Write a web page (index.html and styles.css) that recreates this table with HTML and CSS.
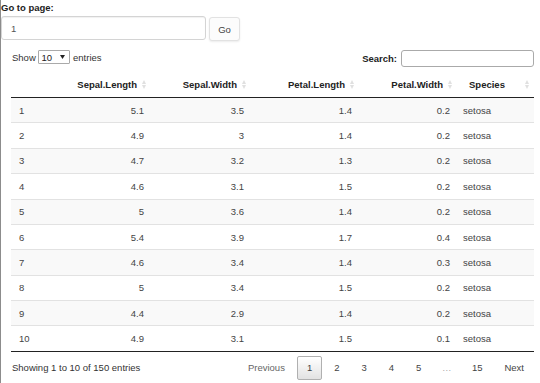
FILE: index.html
```html
<!DOCTYPE html>
<html>
<head>
<meta charset="utf-8">
<link rel="stylesheet" href="styles.css">
</head>
<body>
<div class="goto">
  <div class="goto-label">Go to page:</div>
  <div class="goto-row">
    <input class="page-input" type="text" value="1">
    <button class="go-btn">Go</button>
  </div>
</div>
<div class="dt">
  <div class="controls">
    <div class="length">Show <span class="sel">10<svg class="caret" width="5" height="4" viewBox="0 0 5 4"><path d="M0 0H5L2.5 4Z" fill="#222"/></svg></span> entries</div>
    <div class="search"><span class="search-label">Search:</span><span class="search-input"></span></div>
  </div>
  <table>
    <colgroup>
      <col class="c1"><col class="c2"><col class="c3"><col class="c4"><col class="c5"><col class="c6">
    </colgroup>
    <thead>
      <tr>
        <th></th>
        <th class="num"><div class="th-in">Sepal.Length<svg class="sort" width="4" height="9" viewBox="0 0 4 9"><path d="M0 4L2 0L4 4Z M0 5H4L2 9Z" fill="#e0e0e0"/></svg></div></th>
        <th class="num"><div class="th-in">Sepal.Width<svg class="sort" width="4" height="9" viewBox="0 0 4 9"><path d="M0 4L2 0L4 4Z M0 5H4L2 9Z" fill="#e0e0e0"/></svg></div></th>
        <th class="num"><div class="th-in">Petal.Length<svg class="sort" width="4" height="9" viewBox="0 0 4 9"><path d="M0 4L2 0L4 4Z M0 5H4L2 9Z" fill="#e0e0e0"/></svg></div></th>
        <th class="num"><div class="th-in">Petal.Width<svg class="sort" width="4" height="9" viewBox="0 0 4 9"><path d="M0 4L2 0L4 4Z M0 5H4L2 9Z" fill="#e0e0e0"/></svg></div></th>
        <th class="sp"><div class="th-in sp-in">Species<svg class="sort" width="4" height="9" viewBox="0 0 4 9"><path d="M0 4L2 0L4 4Z M0 5H4L2 9Z" fill="#e0e0e0"/></svg></div></th>
      </tr>
    </thead>
    <tbody>
      <tr><td>1</td><td class="n">5.1</td><td class="n">3.5</td><td class="n">1.4</td><td class="n">0.2</td><td class="s">setosa</td></tr>
      <tr><td>2</td><td class="n">4.9</td><td class="n">3</td><td class="n">1.4</td><td class="n">0.2</td><td class="s">setosa</td></tr>
      <tr><td>3</td><td class="n">4.7</td><td class="n">3.2</td><td class="n">1.3</td><td class="n">0.2</td><td class="s">setosa</td></tr>
      <tr><td>4</td><td class="n">4.6</td><td class="n">3.1</td><td class="n">1.5</td><td class="n">0.2</td><td class="s">setosa</td></tr>
      <tr><td>5</td><td class="n">5</td><td class="n">3.6</td><td class="n">1.4</td><td class="n">0.2</td><td class="s">setosa</td></tr>
      <tr><td>6</td><td class="n">5.4</td><td class="n">3.9</td><td class="n">1.7</td><td class="n">0.4</td><td class="s">setosa</td></tr>
      <tr><td>7</td><td class="n">4.6</td><td class="n">3.4</td><td class="n">1.4</td><td class="n">0.3</td><td class="s">setosa</td></tr>
      <tr><td>8</td><td class="n">5</td><td class="n">3.4</td><td class="n">1.5</td><td class="n">0.2</td><td class="s">setosa</td></tr>
      <tr><td>9</td><td class="n">4.4</td><td class="n">2.9</td><td class="n">1.4</td><td class="n">0.2</td><td class="s">setosa</td></tr>
      <tr><td>10</td><td class="n">4.9</td><td class="n">3.1</td><td class="n">1.5</td><td class="n">0.1</td><td class="s">setosa</td></tr>
    </tbody>
  </table>
  <div class="footer">
    <div class="info">Showing 1 to 10 of 150 entries</div>
    <div class="paginate">
      <span class="pg prev">Previous</span>
      <span class="pg current">1</span>
      <span class="pg">2</span>
      <span class="pg">3</span>
      <span class="pg">4</span>
      <span class="pg">5</span>
      <span class="ellipsis">…</span>
      <span class="pg">15</span>
      <span class="pg next">Next</span>
    </div>
  </div>
</div>
</body>
</html>
```

FILE: styles.css
```css
html {
  background: linear-gradient(to right, #8c8c8c 0, #8c8c8c 1px, #ffffff 1px);
}
body {
  margin: 0;
  font-family: "Liberation Sans", Arial, sans-serif;
  font-size: 9.5px;
  color: #333;
}
.goto-label {
  font-weight: bold;
  line-height: 11px;
  padding-top: 2px;
  padding-left: 1px;
  color: #222;
}
.goto-row {
  display: flex;
  align-items: flex-start;
  gap: 3px;
  margin-top: 3px;
}
.page-input {
  box-sizing: border-box;
  width: 205px;
  height: 24px;
  margin: 0 0 0 1px;
  padding: 0 9px;
  border: 1px solid #d4d4d4;
  border-radius: 3px;
  box-shadow: inset 0 1px 1px rgba(0,0,0,0.06);
  font-family: "Liberation Sans", Arial, sans-serif;
  font-size: 9.5px;
  color: #555;
  outline: none;
}
.go-btn {
  box-sizing: border-box;
  width: 31px;
  height: 24px;
  margin: 1px 0 0 0;
  padding: 0;
  border: 1px solid #e2e2e2;
  border-radius: 3px;
  background: #fcfcfc;
  box-shadow: 0 1px 2px rgba(0,0,0,0.08);
  font-family: "Liberation Sans", Arial, sans-serif;
  font-size: 9.5px;
  color: #444;
}
.dt {
  padding: 0 6px 0 11px;
}
.controls {
  display: flex;
  justify-content: space-between;
  align-items: flex-start;
  margin-top: 9px;
  height: 17px;
}
.length {
  display: flex;
  align-items: center;
  height: 14px;
  padding-left: 1px;
  line-height: 11px;
  white-space: pre;
}
.sel {
  box-sizing: border-box;
  display: inline-flex;
  align-items: center;
  justify-content: space-between;
  width: 32px;
  height: 14px;
  padding: 0 4px 0 2px;
  border: 1px solid #aaa;
  border-radius: 1px;
  background: #fff;
  color: #222;
}
.caret {
  display: block;
}
.search {
  display: flex;
  align-items: center;
  height: 17px;
}
.search-label {
  font-weight: bold;
  color: #222;
}
.search-input {
  box-sizing: border-box;
  display: block;
  width: 133px;
  height: 17px;
  margin-left: 4px;
  border: 1px solid #aaa;
  border-radius: 3px;
  background: #fff;
}
table {
  width: 523px;
  margin-top: 3px;
  border-collapse: separate;
  border-spacing: 0;
  table-layout: fixed;
  border-bottom: 1px solid #222;
}
.c1 { width: 60px; }
.c2 { width: 83px; }
.c3 { width: 100px; }
.c4 { width: 108px; }
.c5 { width: 98px; }
.c6 { width: 74px; }
th {
  padding: 8.5px 8px 7.5px 10px;
  line-height: 11px;
  font-weight: bold;
  color: #222;
  text-align: left;
  border-bottom: 1px solid #222;
}
.th-in {
  display: flex;
  align-items: center;
  justify-content: flex-end;
  gap: 5px;
}
.sort {
  display: block;
  flex: none;
}
th.sp {
  padding-left: 9px;
  padding-right: 5px;
}
.sp-in {
  justify-content: space-between;
}
td {
  padding: 6.7px 10px;
  line-height: 11px;
  border-top: 1px solid #e2e2e2;
  color: #444;
}
td:first-child {
  padding-left: 8px;
}
tbody tr:first-child td {
  border-top: none;
}
tbody tr:nth-child(odd) td {
  background: #f9f9f9;
}
td.n {
  text-align: right;
}
td.s {
  padding-left: 3px;
}
.footer {
  display: flex;
  justify-content: space-between;
  align-items: center;
  padding-top: 4px;
}
.info {
  padding-left: 1px;
  color: #333;
}
.paginate {
  display: flex;
  align-items: center;
}
.pg {
  display: block;
  margin-left: 2px;
  padding: 5.5px 9px;
  line-height: 11px;
  border: 1px solid transparent;
  border-radius: 2px;
  color: #444;
}
.pg.current {
  border-color: #b0b0b0;
  background: linear-gradient(to bottom, #ffffff 0%, #e2e2e2 100%);
}
.pg.prev {
  color: #666;
}
.ellipsis {
  display: block;
  margin-left: 2px;
  padding: 0 8.5px;
  line-height: 11px;
  color: #aaa;
}
```
